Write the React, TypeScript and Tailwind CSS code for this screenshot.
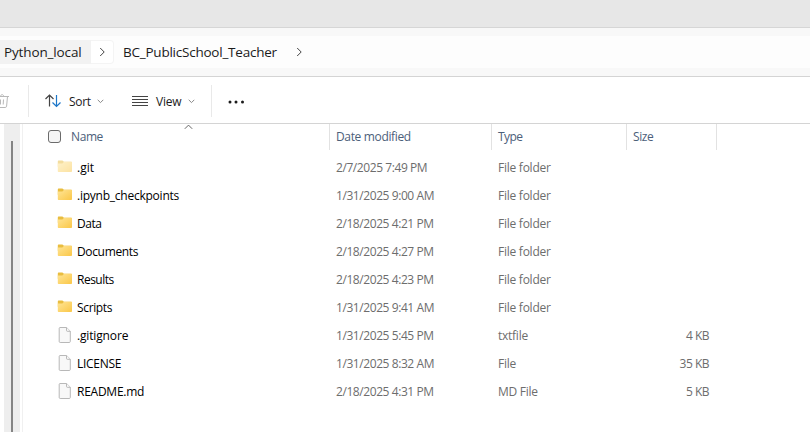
import React from "react";

type Row = {
  name: string;
  nameCls: string;
  date: string;
  type: string;
  size?: string;
  icon: "hidden" | "folder" | "file";
};

const rows: Row[] = [
  { name: ".git", nameCls: "tracking-[0px]", date: "2/7/2025 7:49 PM", type: "File folder", icon: "hidden" },
  { name: ".ipynb_checkpoints", nameCls: "tracking-[-0.24px]", date: "1/31/2025 9:00 AM", type: "File folder", icon: "folder" },
  { name: "Data", nameCls: "tracking-[-0.5px]", date: "2/18/2025 4:21 PM", type: "File folder", icon: "folder" },
  { name: "Documents", nameCls: "tracking-[-0.35px]", date: "2/18/2025 4:27 PM", type: "File folder", icon: "folder" },
  { name: "Results", nameCls: "tracking-[-0.5px]", date: "2/18/2025 4:23 PM", type: "File folder", icon: "folder" },
  { name: "Scripts", nameCls: "tracking-[-0.35px]", date: "1/31/2025 9:41 AM", type: "File folder", icon: "folder" },
  { name: ".gitignore", nameCls: "tracking-[-0.15px]", date: "1/31/2025 5:45 PM", type: "txtfile", size: "4 KB", icon: "file" },
  { name: "LICENSE", nameCls: "tracking-[-0.28px]", date: "1/31/2025 8:32 AM", type: "File", size: "35 KB", icon: "file" },
  { name: "README.md", nameCls: "tracking-[-0.25px]", date: "2/18/2025 4:31 PM", type: "MD File", size: "5 KB", icon: "file" },
];

function FolderIcon({ faded }: { faded: boolean }) {
  return (
    <svg width="16" height="16" viewBox="0 0 16 16" className={faded ? "opacity-50" : ""}>
      <defs>
        <linearGradient id="folderFront" x1="0" y1="0" x2="1" y2="1">
          <stop offset="0" stopColor="#ffe596" />
          <stop offset="1" stopColor="#fac748" />
        </linearGradient>
      </defs>
      <path d="M.8 1.6C.8.9 1.2.4 1.8.4H5.4L7 1.8H14c.6 0 1 .4 1 1v4H.8Z" fill="#e9bd3f" />
      <path d="M.8 3.6H5.4L7.1 1.8H14.2c.5 0 .8.3.8.8V11c0 .6-.4 1-1 1H1.8c-.6 0-1-.4-1-1Z" fill="url(#folderFront)" />
    </svg>
  );
}

function FileIcon() {
  return (
    <svg width="16" height="16" viewBox="0 0 16 16" fill="#f8f8f8" stroke="#b0b0b0" strokeWidth="0.9" className="-translate-y-px">
      <path d="M3 .5H9.6L13.3 4.2V14.5c0 .6-.4 1-1 1H3.2c-.6 0-1-.4-1-1V1.4C2.2.9 2.5.5 3 .5Z" />
      <path d="M9.5.6V3.5c0 .5.3.8.8.8h2.9" />
    </svg>
  );
}

function Chevron({ className, d, w, h, stroke }: { className?: string; d: string; w: number; h: number; stroke: string }) {
  return (
    <svg className={className} width={w} height={h} viewBox={`0 0 ${w} ${h}`} fill="none" stroke={stroke} strokeWidth="1">
      <path d={d} />
    </svg>
  );
}

export default function App() {
  return (
    <div className="flex h-[432px] w-[810px] flex-col overflow-hidden bg-white font-['Open_Sans','Noto_Sans',sans-serif] text-[12px] leading-4 text-[#1b1b1b]">
      <div className="h-7 shrink-0 border-b border-[#d6d6d6] bg-[#e7e7e7]" />
      <div className="flex h-[49px] shrink-0 items-center border-b border-[#d4d4d4] bg-[#f8f8f8]">
        <div className="flex h-8 w-full items-center bg-[#fdfdfd]">
          <div className="flex h-6 w-[91px] items-center whitespace-nowrap bg-[#f2f2f2] pl-1 text-[13.5px] tracking-[-0.14px]">Python_local</div>
          <div className="flex h-6 w-[23px] items-center rounded-r border border-l-0 border-[#f4f4f4] bg-white">
            <Chevron className="ml-2" w={7} h={10} d="M1.2 1 5.2 5 1.2 9" stroke="#444" />
          </div>
          <div className="ml-[9px] w-[173px] whitespace-nowrap text-[13.5px] tracking-[-0.23px]">BC_PublicSchool_Teacher</div>
          <Chevron w={7} h={10} d="M1.2 1 5.2 5 1.2 9" stroke="#444" />
        </div>
      </div>
      <div className="flex h-[47px] shrink-0 items-center border-b border-[#d4d4d4] pt-[3px]">
        <svg width="10" height="16" viewBox="0 0 10 16" fill="none" stroke="#b8b8b8" className="mb-0.5 shrink-0">
          <path d="M-4 3.5H9M7.5 3.5 6.6 13.2c-.1.8-.6 1.3-1.4 1.3H0M.5 3.5C.7 1 3.5 1 3.8 3.5M.5 6.5v5M3.5 6.5l-.3 5" />
        </svg>
        <div className="mb-0.5 ml-[18px] h-8 w-px bg-[#e9e9e9]" />
        <svg width="16" height="14" viewBox="0 0 16 14" fill="none" strokeWidth="1.2" className="mb-0.5 ml-4">
          <path d="M4.5 12.5V1M.5 5 4.5 1 8.5 5" stroke="#444" />
          <path d="M11.5 1V12.5M7.5 8.5 11.5 12.5 15.5 8.5" stroke="#1d77c9" />
        </svg>
        <div className="ml-2 w-[28px] tracking-[-0.3px]">Sort</div>
        <Chevron className="mb-px" w={7} h={5} d="M.7 .8 3.5 3.6 6.3 .8" stroke="#888" />
        <svg width="16" height="12" viewBox="0 0 16 12" stroke="#444" className="mb-0.5 ml-7">
          <path d="M0 1.5H16M0 4.5H16M0 7.5H16M0 10.5H16" />
        </svg>
        <div className="ml-2 w-[32px] tracking-[-0.2px]">View</div>
        <Chevron className="mb-px" w={7} h={5} d="M.7 .8 3.5 3.6 6.3 .8" stroke="#888" />
        <div className="mb-0.5 ml-4 h-8 w-px bg-[#e9e9e9]" />
        <svg width="18" height="4" viewBox="0 0 18 4" fill="#1b1b1b" className="ml-4">
          <circle cx="2" cy="2" r="1.5" />
          <circle cx="8" cy="2" r="1.5" />
          <circle cx="14.5" cy="2" r="1.5" />
        </svg>
      </div>
      <div className="flex flex-1">
        <div className="ml-1 flex w-4 justify-center bg-[#eeeeee] pt-[17px]">
          <div className="w-0.5 bg-[#858585]" />
        </div>
        <div className="ml-0.5 flex-1 border-l border-[#f0f0f0]">
          <div className="relative flex h-[26px] w-[694px] text-[#4c607a]">
            <div className="flex w-[307px] items-center border-r border-[#e2e2e2] pl-[25px]">
              <div className="mb-px mr-2.5 size-[13px] rounded-[3px] border border-[#6b6b6b] bg-[#f5f5f5]" />
              <span className="tracking-[-0.4px]">Name</span>
            </div>
            <div className="flex w-[162px] items-center border-r border-[#e2e2e2] pl-1.5 tracking-[-0.35px]">Date modified</div>
            <div className="flex w-[135px] items-center border-r border-[#e2e2e2] pl-1.5 tracking-[-0.6px]">Type</div>
            <div className="flex w-[90px] items-center border-r border-[#e2e2e2] pl-1.5 tracking-[-0.4px]">Size</div>
            <Chevron className="absolute left-[161px] top-0" w={9} h={6} d="M.8 4.8 4.5 1.1 8.2 4.8" stroke="#666" />
          </div>
          <div className="pt-1">
            {rows.map((r) => (
              <div key={r.name} className="flex h-7 w-[694px] items-center whitespace-nowrap text-[#6d6d6d]">
                <div className="flex w-[307px] items-center gap-[4px] pl-[34px]">
                  {r.icon === "file" ? <FileIcon /> : <FolderIcon faded={r.icon === "hidden"} />}
                  <span className={`text-black ${r.nameCls}`}>{r.name}</span>
                </div>
                <div className="w-[162px] pl-1.5 tracking-[-0.42px]">{r.date}</div>
                <div className="w-[135px] pl-1.5 tracking-[-0.25px]">{r.type}</div>
                <div className="w-[90px] pr-2 text-right tracking-[-0.5px]">{r.size}</div>
              </div>
            ))}
          </div>
        </div>
      </div>
    </div>
  );
}
